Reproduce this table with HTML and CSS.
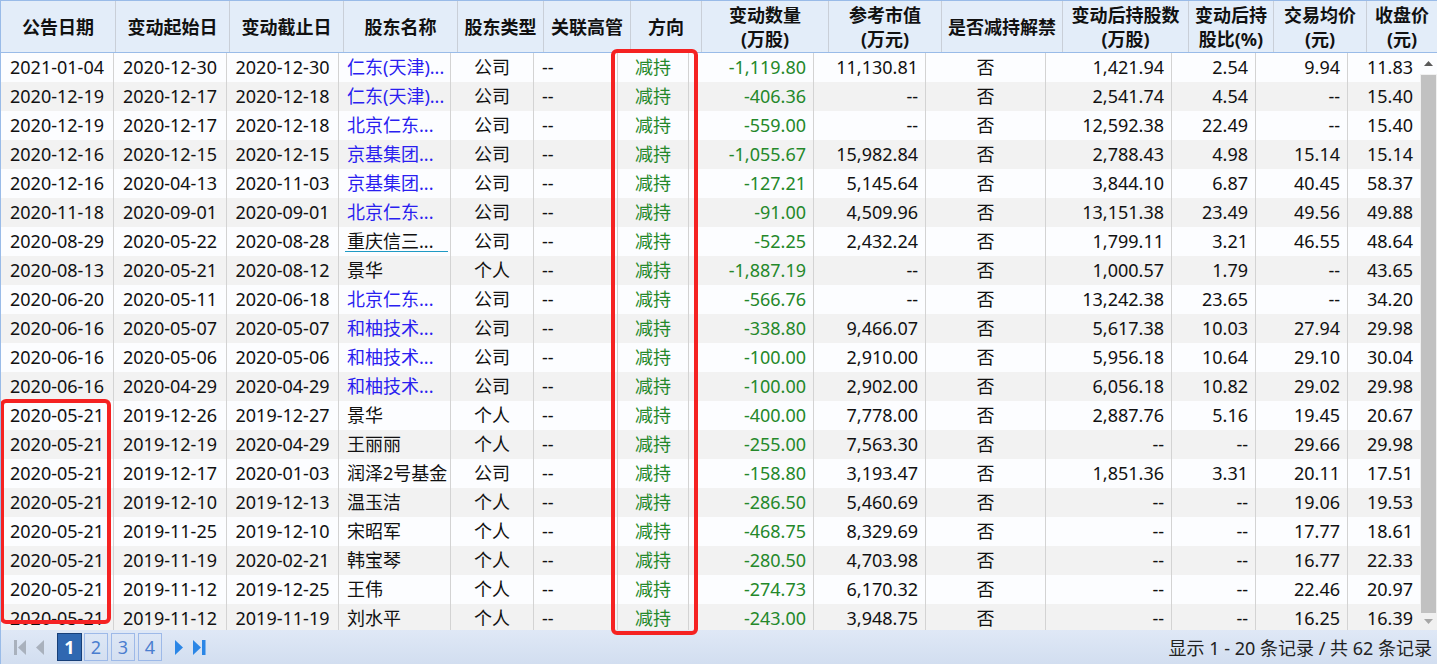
FILE: index.html
```html
<!DOCTYPE html>
<html lang="zh-CN">
<head>
<meta charset="utf-8">
<title>股东增减持</title>
<link rel="stylesheet" href="styles.css">
</head>
<body>
<div class="grid">
  <div class="hd">
    <table class="hd-table">
      <colgroup>
        <col class="h1"><col class="h2"><col class="h3"><col class="h4"><col class="h5"><col class="h6"><col class="h7">
        <col class="h8"><col class="h9"><col class="h10"><col class="h11"><col class="h12"><col class="h13"><col class="h14">
      </colgroup>
      <tr>
        <th>公告日期</th><th>变动起始日</th><th>变动截止日</th><th>股东名称</th><th>股东类型</th><th>关联高管</th><th>方向</th>
        <th>变动数量<br>(万股)</th><th>参考市值<br>(万元)</th><th>是否减持解禁</th><th>变动后持股数<br>(万股)</th><th>变动后持<br>股比(%)</th><th>交易均价<br>(元)</th><th>收盘价<br>(元)</th>
      </tr>
    </table>
  </div>
  <div class="bd">
    <div class="bd-view">
      <table class="bd-table">
        <colgroup>
          <col class="b1"><col class="b2"><col class="b3"><col class="b4"><col class="b5"><col class="b6"><col class="b7">
          <col class="b8"><col class="b9"><col class="b10"><col class="b11"><col class="b12"><col class="b13"><col class="b14">
        </colgroup>
        <tr><td class="c">2021-01-04</td><td class="c">2020-12-30</td><td class="c">2020-12-30</td><td class="l lnk">仁东(天津)...</td><td class="c">公司</td><td class="l">--</td><td class="c g">减持</td><td class="r g">-1,119.80</td><td class="r">11,130.81</td><td class="c">否</td><td class="r">1,421.94</td><td class="r">2.54</td><td class="r">9.94</td><td class="r">11.83</td></tr>
        <tr><td class="c">2020-12-19</td><td class="c">2020-12-17</td><td class="c">2020-12-18</td><td class="l lnk">仁东(天津)...</td><td class="c">公司</td><td class="l">--</td><td class="c g">减持</td><td class="r g">-406.36</td><td class="r">--</td><td class="c">否</td><td class="r">2,541.74</td><td class="r">4.54</td><td class="r">--</td><td class="r">15.40</td></tr>
        <tr><td class="c">2020-12-19</td><td class="c">2020-12-17</td><td class="c">2020-12-18</td><td class="l lnk">北京仁东...</td><td class="c">公司</td><td class="l">--</td><td class="c g">减持</td><td class="r g">-559.00</td><td class="r">--</td><td class="c">否</td><td class="r">12,592.38</td><td class="r">22.49</td><td class="r">--</td><td class="r">15.40</td></tr>
        <tr><td class="c">2020-12-16</td><td class="c">2020-12-15</td><td class="c">2020-12-15</td><td class="l lnk">京基集团...</td><td class="c">公司</td><td class="l">--</td><td class="c g">减持</td><td class="r g">-1,055.67</td><td class="r">15,982.84</td><td class="c">否</td><td class="r">2,788.43</td><td class="r">4.98</td><td class="r">15.14</td><td class="r">15.14</td></tr>
        <tr><td class="c">2020-12-16</td><td class="c">2020-04-13</td><td class="c">2020-11-03</td><td class="l lnk">京基集团...</td><td class="c">公司</td><td class="l">--</td><td class="c g">减持</td><td class="r g">-127.21</td><td class="r">5,145.64</td><td class="c">否</td><td class="r">3,844.10</td><td class="r">6.87</td><td class="r">40.45</td><td class="r">58.37</td></tr>
        <tr><td class="c">2020-11-18</td><td class="c">2020-09-01</td><td class="c">2020-09-01</td><td class="l lnk">北京仁东...</td><td class="c">公司</td><td class="l">--</td><td class="c g">减持</td><td class="r g">-91.00</td><td class="r">4,509.96</td><td class="c">否</td><td class="r">13,151.38</td><td class="r">23.49</td><td class="r">49.56</td><td class="r">49.88</td></tr>
        <tr><td class="c">2020-08-29</td><td class="c">2020-05-22</td><td class="c">2020-08-28</td><td class="l"><span class="ul">重庆信三...</span></td><td class="c">公司</td><td class="l">--</td><td class="c g">减持</td><td class="r g">-52.25</td><td class="r">2,432.24</td><td class="c">否</td><td class="r">1,799.11</td><td class="r">3.21</td><td class="r">46.55</td><td class="r">48.64</td></tr>
        <tr><td class="c">2020-08-13</td><td class="c">2020-05-21</td><td class="c">2020-08-12</td><td class="l">景华</td><td class="c">个人</td><td class="l">--</td><td class="c g">减持</td><td class="r g">-1,887.19</td><td class="r">--</td><td class="c">否</td><td class="r">1,000.57</td><td class="r">1.79</td><td class="r">--</td><td class="r">43.65</td></tr>
        <tr><td class="c">2020-06-20</td><td class="c">2020-05-11</td><td class="c">2020-06-18</td><td class="l lnk">北京仁东...</td><td class="c">公司</td><td class="l">--</td><td class="c g">减持</td><td class="r g">-566.76</td><td class="r">--</td><td class="c">否</td><td class="r">13,242.38</td><td class="r">23.65</td><td class="r">--</td><td class="r">34.20</td></tr>
        <tr><td class="c">2020-06-16</td><td class="c">2020-05-07</td><td class="c">2020-05-07</td><td class="l lnk">和柚技术...</td><td class="c">公司</td><td class="l">--</td><td class="c g">减持</td><td class="r g">-338.80</td><td class="r">9,466.07</td><td class="c">否</td><td class="r">5,617.38</td><td class="r">10.03</td><td class="r">27.94</td><td class="r">29.98</td></tr>
        <tr><td class="c">2020-06-16</td><td class="c">2020-05-06</td><td class="c">2020-05-06</td><td class="l lnk">和柚技术...</td><td class="c">公司</td><td class="l">--</td><td class="c g">减持</td><td class="r g">-100.00</td><td class="r">2,910.00</td><td class="c">否</td><td class="r">5,956.18</td><td class="r">10.64</td><td class="r">29.10</td><td class="r">30.04</td></tr>
        <tr><td class="c">2020-06-16</td><td class="c">2020-04-29</td><td class="c">2020-04-29</td><td class="l lnk">和柚技术...</td><td class="c">公司</td><td class="l">--</td><td class="c g">减持</td><td class="r g">-100.00</td><td class="r">2,902.00</td><td class="c">否</td><td class="r">6,056.18</td><td class="r">10.82</td><td class="r">29.02</td><td class="r">29.98</td></tr>
        <tr><td class="c">2020-05-21</td><td class="c">2019-12-26</td><td class="c">2019-12-27</td><td class="l">景华</td><td class="c">个人</td><td class="l">--</td><td class="c g">减持</td><td class="r g">-400.00</td><td class="r">7,778.00</td><td class="c">否</td><td class="r">2,887.76</td><td class="r">5.16</td><td class="r">19.45</td><td class="r">20.67</td></tr>
        <tr><td class="c">2020-05-21</td><td class="c">2019-12-19</td><td class="c">2020-04-29</td><td class="l">王丽丽</td><td class="c">个人</td><td class="l">--</td><td class="c g">减持</td><td class="r g">-255.00</td><td class="r">7,563.30</td><td class="c">否</td><td class="r">--</td><td class="r">--</td><td class="r">29.66</td><td class="r">29.98</td></tr>
        <tr><td class="c">2020-05-21</td><td class="c">2019-12-17</td><td class="c">2020-01-03</td><td class="l">润泽2号基金</td><td class="c">公司</td><td class="l">--</td><td class="c g">减持</td><td class="r g">-158.80</td><td class="r">3,193.47</td><td class="c">否</td><td class="r">1,851.36</td><td class="r">3.31</td><td class="r">20.11</td><td class="r">17.51</td></tr>
        <tr><td class="c">2020-05-21</td><td class="c">2019-12-10</td><td class="c">2019-12-13</td><td class="l">温玉洁</td><td class="c">个人</td><td class="l">--</td><td class="c g">减持</td><td class="r g">-286.50</td><td class="r">5,460.69</td><td class="c">否</td><td class="r">--</td><td class="r">--</td><td class="r">19.06</td><td class="r">19.53</td></tr>
        <tr><td class="c">2020-05-21</td><td class="c">2019-11-25</td><td class="c">2019-12-10</td><td class="l">宋昭军</td><td class="c">个人</td><td class="l">--</td><td class="c g">减持</td><td class="r g">-468.75</td><td class="r">8,329.69</td><td class="c">否</td><td class="r">--</td><td class="r">--</td><td class="r">17.77</td><td class="r">18.61</td></tr>
        <tr><td class="c">2020-05-21</td><td class="c">2019-11-19</td><td class="c">2020-02-21</td><td class="l">韩宝琴</td><td class="c">个人</td><td class="l">--</td><td class="c g">减持</td><td class="r g">-280.50</td><td class="r">4,703.98</td><td class="c">否</td><td class="r">--</td><td class="r">--</td><td class="r">16.77</td><td class="r">22.33</td></tr>
        <tr><td class="c">2020-05-21</td><td class="c">2019-11-12</td><td class="c">2019-12-25</td><td class="l">王伟</td><td class="c">个人</td><td class="l">--</td><td class="c g">减持</td><td class="r g">-274.73</td><td class="r">6,170.32</td><td class="c">否</td><td class="r">--</td><td class="r">--</td><td class="r">22.46</td><td class="r">20.97</td></tr>
        <tr><td class="c">2020-05-21</td><td class="c">2019-11-12</td><td class="c">2019-11-19</td><td class="l">刘水平</td><td class="c">个人</td><td class="l">--</td><td class="c g">减持</td><td class="r g">-243.00</td><td class="r">3,948.75</td><td class="c">否</td><td class="r">--</td><td class="r">--</td><td class="r">16.25</td><td class="r">16.39</td></tr>
      </table>
    </div>
    <div class="sb">
      <div class="sb-up"><svg width="9" height="5" viewBox="0 0 9 5"><path d="M0 5 L4.5 0 L9 5 Z" fill="#5a5a5a"/></svg></div>
      <div class="sb-thumb"></div>
      <div class="sb-dn"><svg width="9" height="5" viewBox="0 0 9 5"><path d="M0 0 L4.5 5 L9 0 Z" fill="#a6a6a6"/></svg></div>
    </div>
  </div>
  <div class="pager">
    <div class="pg-left">
      <svg class="pg-first" width="13" height="15" viewBox="0 0 13 15"><rect x="0" y="0" width="3" height="15" fill="#a9b1bd"/><path d="M12 0 L4 7.5 L12 15 Z" fill="#a9b1bd"/></svg>
      <svg class="pg-prev" width="8" height="15" viewBox="0 0 8 15"><path d="M8 0 L0 7.5 L8 15 Z" fill="#a9b1bd"/></svg>
      <span class="pg-btn on">1</span>
      <span class="pg-btn">2</span>
      <span class="pg-btn">3</span>
      <span class="pg-btn">4</span>
      <svg class="pg-next" width="8" height="15" viewBox="0 0 8 15"><path d="M0 0 L8 7.5 L0 15 Z" fill="#2b86e6"/></svg>
      <svg class="pg-last" width="13" height="15" viewBox="0 0 13 15"><path d="M0 0 L8 7.5 L0 15 Z" fill="#2b86e6"/><rect x="9" y="0" width="3.5" height="15" fill="#2b86e6"/></svg>
    </div>
    <div class="pg-info">显示 1 - 20 条记录 / 共 62 条记录</div>
  </div>
  <div class="mark mark-dir"></div>
  <div class="mark mark-date"></div>
</div>
</body>
</html>
```

FILE: styles.css
```css
html, body {
  margin: 0;
  padding: 0;
  background: #ffffff;
}
body {
  font-family: "Noto Sans", "Noto Sans CJK SC", sans-serif;
  font-size: 18px;
  color: #111111;
}
.grid {
  position: relative;
  width: 1437px;
  height: 664px;
  overflow: hidden;
  border-left: 1px solid #99bbe8;
  box-sizing: border-box;
  display: flex;
  flex-direction: column;
}

/* header */
.hd {
  height: 53px;
  flex: none;
  background: #e3edf9;
  border-top: 1px solid #99bbe8;
  border-bottom: 1px solid #99bbe8;
  box-sizing: border-box;
}
.hd-table {
  width: 1436px;
  height: 51px;
  table-layout: fixed;
  border-collapse: separate;
  border-spacing: 0;
}
.hd-table th {
  padding: 0;
  border-right: 1px solid #c9cfd8;
  font-weight: bold;
  font-size: 18px;
  line-height: 24px;
  color: #111111;
  text-align: center;
  vertical-align: middle;
  white-space: nowrap;
  overflow: hidden;
}
.hd-table th:last-child { border-right: none; }
.h1 { width: 115px; }
.h2 { width: 114px; }
.h3 { width: 114px; }
.h4 { width: 114px; }
.h5 { width: 86px; }
.h6 { width: 87px; }
.h7 { width: 71px; }
.h8 { width: 127px; }
.h9 { width: 113px; }
.h10 { width: 121px; }
.h11 { width: 126px; }
.h12 { width: 85px; }
.h13 { width: 93px; }
.h14 { width: 70px; }

/* body */
.bd {
  height: 577px;
  flex: none;
  display: flex;
}
.bd-view {
  width: 1419px;
  height: 577px;
  overflow: hidden;
}
.bd-table {
  width: 1419px;
  table-layout: fixed;
  border-collapse: separate;
  border-spacing: 0;
}
.b1 { width: 113px; }
.b2 { width: 113px; }
.b3 { width: 112px; }
.b4 { width: 112px; }
.b5 { width: 83px; }
.b6 { width: 84px; }
.b7 { width: 71px; }
.b8 { width: 125px; }
.b9 { width: 112px; }
.b10 { width: 120px; }
.b11 { width: 126px; }
.b12 { width: 84px; }
.b13 { width: 92px; }
.b14 { width: 72px; }
.bd-table tr { height: 29px; background: #fcfdff; }
.bd-table tr:nth-child(even) { background: #f2f2f2; }
.bd-table td {
  height: 29px;
  padding: 0 8px;
  border-right: 1px solid #d3d3d3;
  box-sizing: border-box;
  white-space: nowrap;
  overflow: hidden;
  line-height: 29px;
  color: #111111;
}
.bd-table td:last-child { border-right: none; }
.c { text-align: center; }
.l { text-align: left; }
.bd-table td.r { text-align: right; padding-right: 7px; }
.g { color: #24882a !important; }
.lnk { color: #2a1ef0 !important; }
.ul {
  display: block;
  line-height: 20px;
  margin: 0 -6px 0 -2px;
  padding-left: 2px;
  border-bottom: 1px solid #1f9ac4;
}

/* scrollbar */
.sb {
  width: 17px;
  height: 577px;
  background: #f0f0f0;
  display: flex;
  flex-direction: column;
  align-items: center;
}
.sb-up {
  height: 21px;
  width: 17px;
  display: flex;
  align-items: center;
  justify-content: center;
  background: #fcfdff;
}
.sb-thumb {
  width: 15px;
  height: 538px;
  margin-top: 1px;
  background: #c1c1c1;
}
.sb-dn {
  flex: 1;
  width: 17px;
  display: flex;
  align-items: center;
  justify-content: center;
}

/* pager */
.pager {
  height: 34px;
  flex: none;
  display: flex;
  align-items: center;
  justify-content: space-between;
  background: linear-gradient(#dfe8f6, #d2def0);
  padding: 0 5px 0 13px;
}
.pg-left {
  display: flex;
  align-items: center;
}
.pg-first { margin-right: 9px; }
.pg-prev { margin-right: 13px; }
.pg-btn {
  width: 24px;
  height: 28px;
  box-sizing: border-box;
  border: 1px solid #9db9e8;
  color: #4a7ecf;
  font-size: 18px;
  line-height: 26px;
  text-align: center;
  margin-right: 3px;
}
.pg-btn.on {
  width: 25px;
  background: #3068b1;
  border-color: #173f78;
  color: #ffffff;
  font-weight: bold;
  margin-right: 2px;
}
.pg-btn:nth-child(6) { margin-right: 13px; }
.pg-next { margin-right: 10px; }
.pg-info {
  font-size: 18px;
  color: #222222;
  white-space: nowrap;
}

/* red highlight marks */
.mark {
  position: absolute;
  border: 4px solid #f52222;
  border-radius: 6px;
  box-sizing: border-box;
  pointer-events: none;
}
.mark-dir {
  left: 610px;
  top: 49px;
  width: 87px;
  height: 586px;
}
.mark-date {
  left: -1px;
  top: 399px;
  width: 111px;
  height: 225px;
}
```
